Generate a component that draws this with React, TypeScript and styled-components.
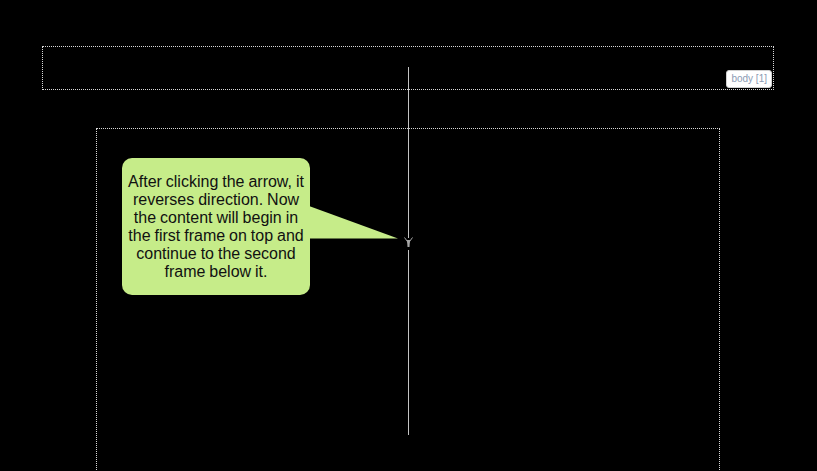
import React from "react";
import styled, { createGlobalStyle } from "styled-components";

const Global = createGlobalStyle`
  html, body { margin: 0; padding: 0; background: #000; }
  body { font-family: "Liberation Sans", Arial, sans-serif; overflow: hidden; }
`;

const Page = styled.div`
  position: relative;
  width: 817px;
  height: 471px;
  background: #000;
  overflow: hidden;
  display: flex;
  flex-direction: column;
  padding-top: 46px;
  box-sizing: border-box;
`;

const TopFrame = styled.div`
  position: relative;
  margin-left: 42px;
  width: 732px;
  height: 44px;
  box-sizing: border-box;
  border: 1px dotted #d8d8d8;
  flex: none;
`;

const Tag = styled.div`
  position: absolute;
  right: 1px;
  bottom: 1px;
  height: 18px;
  padding: 0 4px;
  background: #fff;
  border-radius: 3px;
  border: 1px solid #cfcfcf;
  box-sizing: border-box;
  font-size: 10px;
  line-height: 16px;
  color: #8c9bb4;
  white-space: nowrap;
`;

const BodyFrame = styled.div`
  margin-top: 38px;
  margin-left: 96px;
  width: 624px;
  height: 400px;
  box-sizing: border-box;
  border: 1px dotted #d8d8d8;
  border-bottom: none;
  flex: none;
`;

const Overlay = styled.svg`
  position: absolute;
  left: 0;
  top: 0;
  width: 817px;
  height: 471px;
  pointer-events: none;
`;

const Callout = styled.div`
  position: absolute;
  left: 122px;
  top: 158px;
  width: 188px;
  height: 137px;
  box-sizing: border-box;
  background: #c6ec89;
  border-radius: 10px;
  display: flex;
  align-items: center;
  justify-content: center;
  text-align: center;
  font-size: 16px;
  line-height: 18px;
  color: #111;
  word-spacing: -0.5px;
  white-space: nowrap;
`;

export default function App() {
  return (
    <>
      <Global />
      <Page>
        <TopFrame>
          <Tag>body [1]</Tag>
        </TopFrame>
        <BodyFrame />
        <Overlay viewBox="0 0 817 471">
          <polygon points="309,206 398,238.5 309,238.5" fill="#c6ec89" />
          <line x1="408.5" y1="67" x2="408.5" y2="238" stroke="#c4c4c4" strokeWidth="1" />
          <line x1="408.5" y1="250" x2="408.5" y2="435" stroke="#c4c4c4" strokeWidth="1" />
          <polyline points="404.5,237.5 408.5,243 412.5,237.5" fill="none" stroke="#a8a8a8" strokeWidth="1" />
          <polygon points="407,240 410,240 409.5,247 407.5,247" fill="#a8a8a8" />
        </Overlay>
        <Callout>
          <div>
            After clicking the arrow, it<br />
            reverses direction. Now<br />
            the content will begin in<br />
            the first frame on top and<br />
            continue to the second<br />
            frame below it.
          </div>
        </Callout>
      </Page>
    </>
  );
}
